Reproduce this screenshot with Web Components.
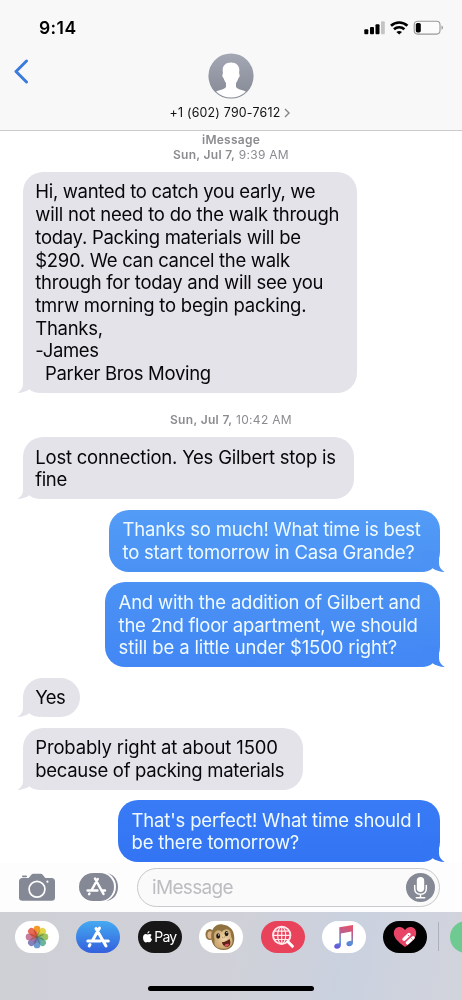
<!DOCTYPE html>
<html lang="en">
<head>
<meta charset="utf-8">
<title>Messages</title>
<style>
html,body{margin:0;padding:0;background:#fff}
body{width:462px;height:1000px;overflow:hidden;font-family:Inter,"Liberation Sans",sans-serif;color:#08080b}
</style>
</head>
<body>
<chat-screen></chat-screen>
<script>
const define=(name,html,setup)=>{
  const template=document.createElement('template');
  template.innerHTML=html;
  customElements.define(name,class extends HTMLElement{
    constructor(){super();this.attachShadow({mode:'open'}).append(template.content.cloneNode(true));}
    connectedCallback(){if(setup)setup(this,this.shadowRoot);}
  });
};

/* A single line of text tracked so that it fills the width in its "w" attribute. */
define('fit-line',`<style>:host{display:block;white-space:pre}span{display:inline-block}</style><span><slot></slot></span>`,(el,root)=>{
  const span=root.querySelector('span'),w=+el.getAttribute('w');
  el.style.width=w+'px';
  const n=el.textContent.length;
  const natural=span.getBoundingClientRect().width;
  if(natural)span.style.letterSpacing=((w-natural)/n).toFixed(3)+'px';
});

define('status-bar',`<style>
:host{display:flex;height:56px;box-sizing:border-box;padding:18px 18px 0 39px;justify-content:space-between;align-items:flex-start}
.time{font-size:17.500px;line-height:20px;font-weight:600;color:#000}
svg{display:block;margin-top:2px}
</style><fit-line class="time" w="37.500">9:14</fit-line>
<svg width="80" height="16" viewBox="0 0 80 16">
<g fill="#000"><rect x=".3" y="9.2" width="4" height="5" rx="1"/><rect x="6" y="7" width="4" height="7.2" rx="1"/><rect x="11.5" y="4.2" width="4" height="10" rx="1"/></g>
<rect x="17" y="1.3" width="3.8" height="12.9" rx="1" fill="#c4c4c6"/>
<g fill="none" stroke="#000" stroke-width="2.6"><path d="M27 5.800a11.700 11.700 0 0 1 16.400 0"/><path d="M30 9.300a7.500 7.500 0 0 1 10.400 0"/></g><path d="M32.400 12q2.800-2 5.600 0l-2.800 2.600z" fill="#000"/>
<rect x="50.200" y="1.200" width="25.800" height="12.900" rx="3.500" fill="#fbfbfb" stroke="#98989b" stroke-width="1.100"/><rect x="51.800" y="2.900" width="5" height="9.500" rx="1.700"/><path d="M77.500 5.500v4.200q1.500-.4 1.500-2.100t-1.500-2.100z" fill="#98989b"/>
</svg>`);

define('contact-header',`<style>
:host{display:grid;grid-template-columns:60px 1fr 60px;height:74px}
.back{padding:3px 0 0 13px}.who{display:flex;flex-direction:column;align-items:center}
.avatar{display:block;margin-top:-3px}.name{display:flex;align-items:center;gap:3px;margin-top:5px;margin-left:-3px;font-size:12.400px;line-height:18px;color:#111}
svg{display:block}
</style>
<div class="back"><svg width="17" height="26" viewBox="0 0 17 26"><path d="M13.500 2 3 12.500 13.500 23" fill="none" stroke="#3b7bdc" stroke-width="3" stroke-linecap="round" stroke-linejoin="round"/></svg></div>
<div class="who"><svg class="avatar" width="46" height="46" viewBox="0 0 46 46"><defs><linearGradient id="g" x2="0" y2="1"><stop stop-color="#a4a8b5"/><stop offset="1" stop-color="#858994"/></linearGradient><clipPath id="c"><circle cx="23" cy="23" r="21.600"/></clipPath></defs><circle cx="23" cy="23" r="22.600" fill="url(#g)"/><path clip-path="url(#c)" fill="#fff" d="M23 9.500c5 0 8.600 3 8.300 8-.1 1.400-.2 2.500-.1 3.500 1 .7.300 3.800-1 4.400-.5 2.100-1.500 3.300-2.200 4.600v4c1.200 2.600 7.500 2.600 11.500 5.700L34 47H12l-5.500-7.300C10.500 36.600 16.800 36.600 18 34v-4c-.7-1.300-1.700-2.500-2.200-4.600-1.300-.6-2-3.700-1-4.400.1-1 0-2.100-.1-3.500-.3-5 3.300-8 8.300-8z"/></svg>
<div class="name"><fit-line w="111">+1 (602) 790-7612</fit-line><svg width="6" height="10" viewBox="0 0 6 10"><path d="m1 1 4 4-4 4" fill="none" stroke="#858589" stroke-width="1.400"/></svg></div></div><span></span>`);

define('time-stamp',`<style>:host{display:flex;flex-direction:column;align-items:center;font-size:12px;line-height:14.500px;color:#8b8b90}</style><slot></slot>`);

define('message-bubble',`<style>
:host{display:block;position:relative;box-sizing:border-box;width:var(--w);margin-left:22.700px;padding:8.400px 0 8.400px 12.600px;border-radius:20px;background:#e4e3e9;font-size:18.500px;line-height:22.700px}
:host([sent]){margin-left:auto;margin-right:22.500px;padding-left:13.600px;color:#effaff;background:var(--blue)}
svg{position:absolute;bottom:0;left:-6px;fill:#e4e3e9}
.text{position:relative}
:host([sent]) svg{left:auto;right:-5.500px;transform:scaleX(-1);fill:var(--tail)}
</style><svg width="23" height="21" viewBox="0 0 23 21"><path d="M6 0v12.500C6 16 3.800 18.800.3 21c4.800-.1 9.300-1.600 12.200-3.700 2 2.200 5 3.400 10.500 3.700L22 0z"/></svg><div class="text"><slot></slot></div>`);

define('message-list',`<style>:host{display:block;height:732px;overflow:hidden}
time-stamp.first{margin-top:2px}message-bubble{margin-top:10.400px}.b1{margin-top:10px}.b2{margin-top:10px}.second{margin-top:19.700px}b{font-weight:600}</style>
<time-stamp class="first"><fit-line w="58"><b>iMessage</b></fit-line><fit-line w="116">​<b>Sun, Jul 7,</b> 9:39 AM</fit-line></time-stamp>
<message-bubble class="b1" style="--w:334.500px"><fit-line w="280">Hi, wanted to catch you early, we</fit-line><fit-line w="304">will not need to do the walk through</fit-line><fit-line w="265.500">today. Packing materials will be</fit-line><fit-line w="254.500">$290. We can cancel the walk</fit-line><fit-line w="288">through for today and will see you</fit-line><fit-line w="271">tmrw morning to begin packing.</fit-line><fit-line w="67.500">Thanks,</fit-line><fit-line w="63.500">-James</fit-line><fit-line w="175.500">  Parker Bros Moving</fit-line></message-bubble>
<time-stamp class="second"><fit-line w="122"><b>Sun, Jul 7,</b> 10:42 AM</fit-line></time-stamp>
<message-bubble class="b2" style="--w:331.500px"><fit-line w="300.500">Lost connection. Yes Gilbert stop is</fit-line><fit-line w="31.500">fine</fit-line></message-bubble>
<message-bubble sent style="--w:330.500px;--blue:linear-gradient(#539cf6,#4a91f4);--tail:#4b92f4"><fit-line w="298">Thanks so much! What time is best</fit-line><fit-line w="292">to start tomorrow in Casa Grande?</fit-line></message-bubble>
<message-bubble sent style="--w:334.500px;--blue:linear-gradient(#4b92f4,#4287f5);--tail:#4388f5"><fit-line w="302">And with the addition of Gilbert and</fit-line><fit-line w="299">the 2nd floor apartment, we should</fit-line><fit-line w="278.500">still be a little under $1500 right?</fit-line></message-bubble>
<message-bubble style="--w:57px"><fit-line w="30">Yes</fit-line></message-bubble>
<message-bubble style="--w:280px"><fit-line w="242.500">Probably right at about 1500</fit-line><fit-line w="249">because of packing materials</fit-line></message-bubble>
<message-bubble sent style="--w:321.500px;--blue:linear-gradient(#397af5,#3374f4);--tail:#3475f4"><fit-line w="289.500">That's perfect! What time should I</fit-line><fit-line w="167.500">be there tomorrow?</fit-line></message-bubble>`.replace(/\u200b/g,''));

define('compose-bar',`<style>
:host{display:flex;align-items:flex-start;height:49px;box-sizing:border-box;padding:5px 22px 0 19px;background:#fdfdfe}
svg{display:block}.cam{margin-top:5px}.apps{margin:4px 0 0 24px}
.field{box-sizing:border-box;flex:none;width:303px;margin-left:19px;height:39px;border:1.300px solid #c9c9cd;border-radius:20px;background:#fafafb;display:flex;align-items:center;justify-content:space-between;padding:0 4.500px 0 14px;color:#bcbcc1;font-size:19px;line-height:22px}
</style>
<svg class="cam" width="36" height="29" viewBox="0 0 36 29"><path fill="#858995" d="M3.500 5h6.200l2.600-3.200Q13.100.8 14.500.8h7q1.400 0 2.200 1L26.300 5h6.200Q36 5 36 8.500v16q0 3.200-3.500 3.200h-29Q0 27.700 0 24.500v-16Q0 5 3.500 5z"/><rect x="3" y="2.600" width="5" height="1.600" rx=".8" fill="#858995"/><circle cx="18" cy="16.300" r="7.900" fill="none" stroke="#fff" stroke-width="1.700"/><circle cx="28.400" cy="8.700" r="1.100" fill="#fff"/></svg>
<svg class="apps" width="39" height="30" viewBox="0 0 39 30"><path d="M26 1c7 0 13 5.500 13 14s-6 14-13 14z" fill="#858995"/><rect x="-1.500" y="-.7" width="38.500" height="31" rx="15.500" fill="#fff"/><rect x="0" y="1" width="35" height="28" rx="14" fill="#858995"/><g fill="none" stroke="#fff" stroke-width="2.500" stroke-linecap="round"><path d="m16 6.500 8.500 15.500M18.800 7l-6.200 11M8.600 18.500h9.800M22.500 18.500h3.500M10.500 21.500l-.4.700"/></g></svg>
<div class="field"><fit-line w="81">iMessage</fit-line><svg width="29" height="29" viewBox="0 0 29 29"><circle cx="14.500" cy="14.500" r="14.500" fill="#858995"/><rect x="10.800" y="4" width="7.400" height="15" rx="3.700" fill="#fff"/><path d="M8.700 12.500v3q0 5.700 5.800 5.700t5.800-5.700v-3M14.500 21.500v3M10.300 24.700h8.400" fill="none" stroke="#fff" stroke-width="1.500" stroke-linecap="round"/></svg></div>`);

define('app-pill',`<style>:host{display:flex;flex:none;align-items:center;justify-content:center;width:44px;height:32.500px;border-radius:16.250px;background:var(--bg,#fff);overflow:hidden}</style><slot></slot>`);

define('app-drawer',`<style>
:host{display:flex;flex-direction:column;align-items:center;width:462px;height:88px;overflow:hidden;background:linear-gradient(100deg,#cfd0d6 0%,#d0d1d8 50%,#cad1df 75%,#d2d4dc 100%)}
.row{display:flex;align-items:center;align-self:stretch;gap:17.400px;padding:8.500px 0 0 15px}svg{display:block}.sep{flex:none;width:1px;height:29px;background:#acb0bb;margin:0 -6.500px}.pay{display:flex;align-items:center;gap:2px;color:#fff;font-size:14px;line-height:18px}.home{width:166px;height:5.500px;border-radius:3px;background:#000;margin-top:32.500px}
</style><div class="row">
<app-pill><svg width="24" height="24" viewBox="-12 -12 24 24"><g style="mix-blend-mode:multiply"><rect x="-3.400" y="-11.300" width="6.800" height="10.800" rx="3.400" fill="#f59a27"/><rect x="-3.400" y="-11.300" width="6.800" height="10.800" rx="3.400" fill="#dfd035" fill-opacity=".9" transform="rotate(45)"/><rect x="-3.400" y="-11.300" width="6.800" height="10.800" rx="3.400" fill="#91bd4b" fill-opacity=".9" transform="rotate(90)"/><rect x="-3.400" y="-11.300" width="6.800" height="10.800" rx="3.400" fill="#59ae91" fill-opacity=".9" transform="rotate(135)"/><rect x="-3.400" y="-11.300" width="6.800" height="10.800" rx="3.400" fill="#5b91cb" fill-opacity=".9" transform="rotate(180)"/><rect x="-3.400" y="-11.300" width="6.800" height="10.800" rx="3.400" fill="#7972b4" fill-opacity=".9" transform="rotate(225)"/><rect x="-3.400" y="-11.300" width="6.800" height="10.800" rx="3.400" fill="#c26d8f" fill-opacity=".9" transform="rotate(270)"/><rect x="-3.400" y="-11.300" width="6.800" height="10.800" rx="3.400" fill="#e5523d" fill-opacity=".85" transform="rotate(315)"/></g><path d="m0 0 2.500 6.500M0 0l6.500 2.500M0 0l6.500-2.500M0 0l2.500-6.500M0 0l-2.500-6.500M0 0l-6.500-2.500M0 0l-6.500 2.500M0 0l-2.500 6.500" fill="none" stroke="#5d5036" stroke-opacity=".5"/></svg></app-pill>
<app-pill style="--bg:linear-gradient(#45aaf1,#335fdd)"><svg width="26" height="24" viewBox="0 0 26 24"><g fill="none" stroke="#fff" stroke-width="3" stroke-linecap="round"><path d="m11 3.500 10 17.500M14.500 3 7.500 15.500M2.800 16h12.500M19.500 16h3.800M5 19.500l-.8 1.500"/></g></svg></app-pill>
<app-pill style="--bg:#171717"><div class="pay"><svg width="9" height="12" viewBox="0 0 9 12"><path fill="#fff" d="M6.500 0C6.500 1.500 5.600 2.500 4.300 2.600 4.300 1.300 5.200.3 6.500 0zM8.600 4C7.100 5 7.200 7.400 9 8.200 8.400 9.800 7.500 11.300 6.500 11.300c-.8 0-1.100-.4-1.900-.4s-1.200.5-1.900.5C1.400 11.400 0 9 0 6.700 0 4.400 1.300 3.100 2.700 3.100c.8 0 1.400.5 2 .5s1.200-.6 2.200-.5c.7 0 1.300.3 1.700.9z"/></svg><fit-line w="22">Pay</fit-line></div></app-pill>
<app-pill><svg width="34" height="28" viewBox="0 0 34 28"><defs><radialGradient id="f" cx=".55" cy=".45"><stop stop-color="#f0d6a8"/><stop offset="1" stop-color="#cda973"/></radialGradient></defs><ellipse cx="5.800" cy="11.500" rx="4.300" ry="5.500" fill="#90703f"/><ellipse cx="6.200" cy="12" rx="2.800" ry="3.800" fill="#dcb487"/><path d="M18.500 1.500C12 .5 7.200 5.500 7.200 13.500S12 27 19.500 27c7.200 0 11-4.800 10.800-12C30.200 7 25.500 2 18.500 1.500z" fill="#8e713f"/><path d="M10 11.500c1.200-4.700 5.500-5.300 7.800-2.400C20 5.800 25 5 26.500 9c.7 2.300.2 3.700 1.400 6.500 2.300 5.500-1.900 10-8.200 10.200-6.500.2-10-3-9.200-7.400.4-2.300-1.100-4.500-.5-6.800z" fill="url(#f)"/><ellipse cx="14.200" cy="13" rx="2" ry="2.700" fill="#201813"/><ellipse cx="22.500" cy="10.600" rx="1.900" ry="2.600" fill="#201813"/><circle cx="14.700" cy="11.900" r=".7" fill="#fff"/><circle cx="22.900" cy="9.600" r=".7" fill="#fff"/><path d="m18.400 14.200.9.600m1.700-1.300-.3.900" stroke="#805332"/><path d="M17.800 19.300c2.800-.3 5.500-1.600 7.600-3.300 1.900 3.500.8 7.600-2.300 7.900-2.700.2-4.600-2-5.300-4.600z" fill="#612019"/><path d="M20.300 22.600c.9-1.700 3-2.400 4.700-1.700-.7 2.700-3 3.700-4.700 1.700z" fill="#db5861"/></svg></app-pill>
<app-pill style="--bg:#e8435a"><svg width="24" height="24" viewBox="0 0 24 24"><g fill="none" stroke="#ffe9ed" stroke-width="1.200"><circle cx="10.700" cy="10.300" r="8.700" stroke-width="1.900"/><ellipse cx="10.700" cy="10.300" rx="4" ry="8.500"/><path d="M10.700 1.800v17M2.200 10.300h17M3.700 6.100h14M3.700 14.500h14"/></g><path d="m16.700 16.500 4.700 4.800" stroke="#fff" stroke-width="3" stroke-linecap="round"/></svg></app-pill>
<app-pill><svg width="22" height="26" viewBox="0 0 22 26"><defs><linearGradient id="m" gradientUnits="userSpaceOnUse" x1="16" y1="1" x2="8" y2="26"><stop stop-color="#e45468"/><stop offset=".3" stop-color="#c25d89"/><stop offset=".65" stop-color="#5691d9"/><stop offset="1" stop-color="#684ed9"/></linearGradient></defs><path fill="url(#m)" d="M6.300 3.300 20 1v17.500c0 2.600-1.700 3.800-3.700 3.800-2.100 0-3.100-1.200-2.900-2.700.3-1.900 1.900-2.600 5-2.800V7.600L7.900 9.400v11.400c0 2.700-1.700 4-3.900 4-2 0-3-1.200-2.800-2.700.3-1.900 1.900-2.700 5.100-2.900z"/></svg></app-pill>
<app-pill style="--bg:#020203"><svg width="24" height="22" viewBox="0 0 24 22"><path fill="#e84466" d="M12 21C4.500 15.500.8 11.500.8 7c0-6.800 8-8 11.200-3 3.200-5 11.200-3.800 11.200 3 0 4.500-3.700 8.500-11.200 14z"/><g stroke-linecap="round"><path d="m11 13.200 5-4.700M14.300 17l5.800-5.300" stroke="#fff" stroke-width="3.400"/><path d="m10.800 16 3 3.200M15.200 9.200l.5.500M18.700 12.700l.5.500" stroke="#e84466" stroke-width="1"/></g></svg></app-pill>
<span class="sep"></span><app-pill style="--bg:#6fca91"></app-pill></div><div class="home"></div>`);

define('chat-screen',`<style>:host{display:flex;flex-direction:column;width:462px;height:1000px;background:#fff;overflow:hidden}header{flex:none;box-sizing:border-box;height:131px;background:#f8f8f9;border-bottom:1px solid #cbcbcd}message-list,compose-bar,app-drawer{flex:none}</style><header><status-bar></status-bar><contact-header></contact-header></header><message-list></message-list><compose-bar></compose-bar><app-drawer></app-drawer>`);
</script>
</body>
</html>
